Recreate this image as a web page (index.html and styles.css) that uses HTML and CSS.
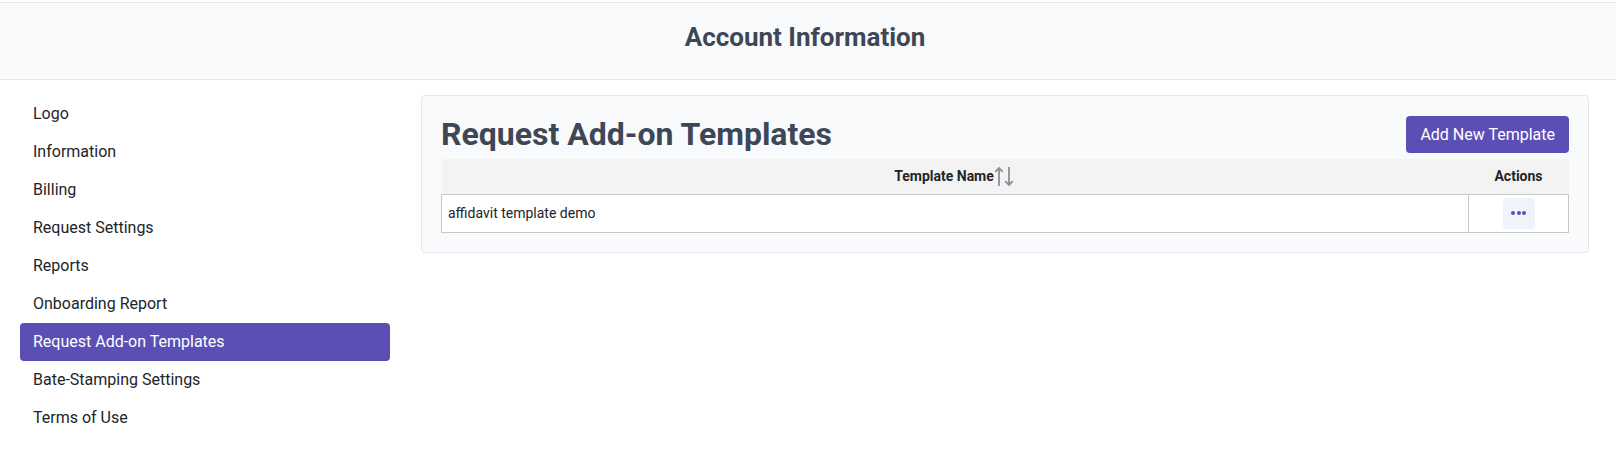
FILE: index.html
```html
<!DOCTYPE html>
<html lang="en">
<head>
<meta charset="utf-8">
<title>Account Information</title>
<link rel="stylesheet" href="styles.css">
</head>
<body>
<header class="page-header">
  <h1 class="page-title">Account Information</h1>
</header>
<div class="main">
  <nav class="sidebar">
    <a class="nav-item" href="#">Logo</a>
    <a class="nav-item" href="#">Information</a>
    <a class="nav-item" href="#">Billing</a>
    <a class="nav-item" href="#">Request Settings</a>
    <a class="nav-item" href="#">Reports</a>
    <a class="nav-item" href="#">Onboarding Report</a>
    <a class="nav-item active" href="#">Request Add-on Templates</a>
    <a class="nav-item" href="#">Bate-Stamping Settings</a>
    <a class="nav-item" href="#">Terms of Use</a>
  </nav>
  <section class="card">
    <div class="card-head">
      <h2 class="card-title">Request Add-on Templates</h2>
      <button class="btn-primary" type="button">Add New Template</button>
    </div>
    <table class="grid">
      <thead>
        <tr>
          <th class="col-name"><span class="th-inner">Template Name<svg class="sort-icon" width="22" height="21" viewBox="0 0 22 21"><path d="M5 20V2M1.2 5.8L5 2l3.8 3.8" fill="none" stroke="#8a8f96" stroke-width="1.8"/><path d="M15 1v18M11.2 15.2L15 19l3.8-3.8" fill="none" stroke="#8a8f96" stroke-width="1.8"/></svg></span></th>
          <th class="col-actions">Actions</th>
        </tr>
      </thead>
      <tbody>
        <tr>
          <td class="cell-name">affidavit template demo</td>
          <td class="cell-actions"><button class="btn-dots" type="button"><span class="dot"></span><span class="dot"></span><span class="dot"></span></button></td>
        </tr>
      </tbody>
    </table>
  </section>
</div>
</body>
</html>
```
FILE: styles.css
```css
* { box-sizing: border-box; }
body {
  margin: 0;
  background: #ffffff;
  font-family: Roboto, "Liberation Sans", Arial, sans-serif;
  color: #212529;
}
.page-header {
  margin-top: 2px;
  height: 78px;
  padding: 0 6px 8px 0;
  border-top: 1px solid #e6e7e9;
  border-bottom: 1px solid #e6e7e9;
  background: #f9fafc;
  display: flex;
  align-items: center;
  justify-content: center;
}
.page-title {
  margin: 0;
  font-size: 26px;
  font-weight: 700;
  color: #3e4756;
}
.main {
  display: flex;
  align-items: flex-start;
  gap: 31px;
  padding: 15px 27px 0 20px;
}
.sidebar {
  width: 370px;
  flex: none;
  display: flex;
  flex-direction: column;
}
.nav-item {
  display: block;
  height: 38px;
  line-height: 38px;
  padding: 0 13px;
  font-size: 16px;
  color: #212529;
  text-decoration: none;
  border-radius: 4px;
}
.nav-item.active {
  background: #5b4fb6;
  color: #ffffff;
}
.card {
  flex: 1;
  border: 1px solid #e3e6ea;
  border-radius: 4px;
  background: #f9fafc;
  padding: 20px 19px 19px;
}
.card-head {
  display: flex;
  align-items: center;
  justify-content: space-between;
  height: 37px;
  margin-bottom: 6px;
}
.card-title {
  margin: 0;
  font-size: 32px;
  font-weight: 700;
  color: #3e4756;
  line-height: 37px;
}
.btn-primary {
  height: 37px;
  padding: 0 14px;
  border: none;
  border-radius: 4px;
  background: #5b4fb6;
  color: #ffffff;
  font-family: inherit;
  font-size: 16px;
}
.grid {
  width: 100%;
  border-collapse: collapse;
}
.grid th {
  height: 35px;
  padding: 0;
  background: #f3f3f3;
  font-size: 14px;
  font-weight: 700;
  color: #212529;
  text-align: center;
}
.th-inner {
  display: inline-flex;
  align-items: center;
}
.sort-icon { display: block; margin-top: 1px; }
.col-actions { width: 100px; }
.grid td {
  height: 38px;
  border: 1px solid #c8c8c8;
  background: #ffffff;
  font-size: 14px;
  color: #212529;
  padding: 0 6px;
}
.cell-actions { text-align: center; }
.btn-dots {
  width: 32px;
  height: 31px;
  border: none;
  border-radius: 4px;
  background: #f0f3fa;
  display: inline-flex;
  align-items: center;
  justify-content: center;
  gap: 1.5px;
  padding: 0;
  vertical-align: middle;
}
.dot {
  width: 4px;
  height: 4px;
  border-radius: 50%;
  background: #5b4fb6;
}
```
